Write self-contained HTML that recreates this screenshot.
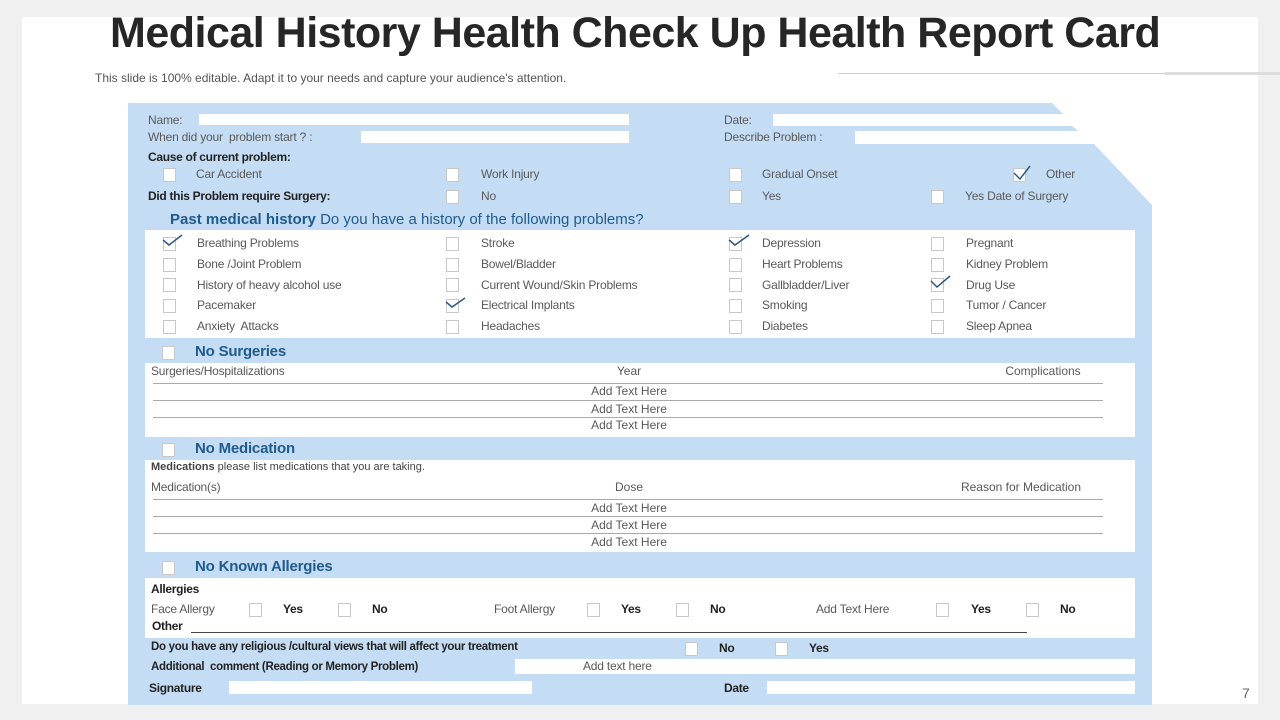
<!DOCTYPE html>
<html><head><meta charset="utf-8"><style>
*{margin:0;padding:0;box-sizing:border-box}
body{width:1280px;height:720px;background:#f0f0f0;position:relative;overflow:hidden;font-family:"Liberation Sans",Arial,sans-serif;color:#555}
.a{position:absolute;white-space:nowrap}
.t{font-size:12px;color:#595959;letter-spacing:-0.2px}
.b{font-size:12px;color:#222;font-weight:bold;letter-spacing:-0.3px}
.w{position:absolute;background:#fff}
.cb{position:absolute;width:13px;height:14px;background:#fff;border:1px solid #c8c8c8}
.ck{position:absolute;width:22px;height:16px}
.h{font-size:15px;font-weight:bold;color:#1f5a8e;letter-spacing:-0.2px}
.ln{position:absolute;height:1px;background:#aaa;left:153px;width:950px}
.c{position:absolute;font-size:12px;color:#595959;transform:translateX(-50%);white-space:nowrap}
</style></head><body>
<div class="w" style="left:22px;top:17px;width:1236px;height:687px"></div>
<div class="a" style="left:110px;top:9px;font-size:43px;font-weight:bold;color:#262626;letter-spacing:-0.5px">Medical History Health Check Up Health Report Card</div>
<div class="a" style="left:95px;top:71px;font-size:12px;color:#555">This slide is 100% editable. Adapt it to your needs and capture your audience's attention.</div>
<div class="a" style="left:838px;top:73px;width:330px;height:1px;background:#ccc"></div>
<div class="a" style="left:1165px;top:72px;width:115px;height:3px;background:#ddd"></div>
<div class="a" style="left:1242px;top:685px;font-size:14px;color:#666">7</div>
<svg class="a" style="left:0;top:0" width="1280" height="720"><polygon fill="#c5ddf4" points="128,103 1052,103 1064,115 1064,126 1072,126 1080,132 1080,144 1094,144 1152,205 1152,705 128,705"/></svg>
<!-- fields -->
<div class="w" style="left:199px;top:114px;width:430px;height:11px"></div>
<div class="w" style="left:361px;top:131px;width:268px;height:12px"></div>
<div class="w" style="left:773px;top:114px;width:291px;height:12px"></div>
<div class="w" style="left:855px;top:131px;width:225px;height:13px"></div>
<div class="a t" style="left:148px;top:113px">Name:</div>
<div class="a t" style="left:148px;top:130px">When did your&nbsp; problem start ? :</div>
<div class="a t" style="left:724px;top:113px">Date:</div>
<div class="a t" style="left:724px;top:130px">Describe Problem :</div>
<div class="a b" style="left:148px;top:150px">Cause of current problem:</div>
<div class="cb" style="left:163px;top:168px"></div><div class="a t" style="left:196px;top:167px">Car Accident</div>
<div class="cb" style="left:446px;top:168px"></div><div class="a t" style="left:481px;top:167px">Work Injury</div>
<div class="cb" style="left:729px;top:168px"></div><div class="a t" style="left:762px;top:167px">Gradual Onset</div>
<div class="cb" style="left:1013px;top:168px"></div><div class="a t" style="left:1046px;top:167px">Other</div>
<div class="a b" style="left:148px;top:189px">Did this Problem require Surgery:</div>
<div class="cb" style="left:446px;top:190px"></div><div class="a t" style="left:481px;top:189px">No</div>
<div class="cb" style="left:729px;top:190px"></div><div class="a t" style="left:762px;top:189px">Yes</div>
<div class="cb" style="left:931px;top:190px"></div><div class="a t" style="left:965px;top:189px">Yes Date of Surgery</div>
<div class="a" style="left:170px;top:211px;font-size:15px;color:#1f5a8e"><b>Past medical history</b> Do you have a history of the following problems?</div>
<!-- past history box -->
<div class="w" style="left:145px;top:230px;width:990px;height:108px"></div>
<div class="cb" style="left:163px;top:237px"></div><div class="a t" style="left:197px;top:236px">Breathing Problems</div>
<div class="cb" style="left:163px;top:258px"></div><div class="a t" style="left:197px;top:257px">Bone /Joint Problem</div>
<div class="cb" style="left:163px;top:278px"></div><div class="a t" style="left:197px;top:278px">History of heavy alcohol use</div>
<div class="cb" style="left:163px;top:299px"></div><div class="a t" style="left:197px;top:298px">Pacemaker</div>
<div class="cb" style="left:163px;top:320px"></div><div class="a t" style="left:197px;top:319px">Anxiety&nbsp; Attacks</div>
<div class="cb" style="left:446px;top:237px"></div><div class="a t" style="left:481px;top:236px">Stroke</div>
<div class="cb" style="left:446px;top:258px"></div><div class="a t" style="left:481px;top:257px">Bowel/Bladder</div>
<div class="cb" style="left:446px;top:278px"></div><div class="a t" style="left:481px;top:278px">Current Wound/Skin Problems</div>
<div class="cb" style="left:446px;top:299px"></div><div class="a t" style="left:481px;top:298px">Electrical Implants</div>
<div class="cb" style="left:446px;top:320px"></div><div class="a t" style="left:481px;top:319px">Headaches</div>
<div class="cb" style="left:729px;top:237px"></div><div class="a t" style="left:762px;top:236px">Depression</div>
<div class="cb" style="left:729px;top:258px"></div><div class="a t" style="left:762px;top:257px">Heart Problems</div>
<div class="cb" style="left:729px;top:278px"></div><div class="a t" style="left:762px;top:278px">Gallbladder/Liver</div>
<div class="cb" style="left:729px;top:299px"></div><div class="a t" style="left:762px;top:298px">Smoking</div>
<div class="cb" style="left:729px;top:320px"></div><div class="a t" style="left:762px;top:319px">Diabetes</div>
<div class="cb" style="left:931px;top:237px"></div><div class="a t" style="left:966px;top:236px">Pregnant</div>
<div class="cb" style="left:931px;top:258px"></div><div class="a t" style="left:966px;top:257px">Kidney Problem</div>
<div class="cb" style="left:931px;top:278px"></div><div class="a t" style="left:966px;top:278px">Drug Use</div>
<div class="cb" style="left:931px;top:299px"></div><div class="a t" style="left:966px;top:298px">Tumor / Cancer</div>
<div class="cb" style="left:931px;top:320px"></div><div class="a t" style="left:966px;top:319px">Sleep Apnea</div>
<!-- check marks -->
<svg class="a" style="left:0;top:0" width="1280" height="720" fill="none" stroke="#2c5a85" stroke-width="1.5">
<path d="M1014,173 L1020,179 L1030,166"/>
<path d="M163,240 L169,245 L182,235"/>
<path d="M729,240 L735,245 L749,235"/>
<path d="M931,281 L937,287 L950,276"/>
<path d="M446,302 L452,307 L465,298"/>
</svg>
<!-- surgeries -->
<div class="cb" style="left:162px;top:346px"></div><div class="a h" style="left:195px;top:343px">No Surgeries</div>
<div class="w" style="left:145px;top:363px;width:990px;height:74px"></div>
<div class="a t" style="left:151px;top:364px">Surgeries/Hospitalizations</div>
<div class="c" style="left:629px;top:364px">Year</div>
<div class="c" style="left:1043px;top:364px">Complications</div>
<div class="ln" style="top:383px"></div><div class="ln" style="top:400px"></div><div class="ln" style="top:417px"></div>
<div class="c" style="left:629px;top:384px">Add Text Here</div>
<div class="c" style="left:629px;top:402px">Add Text Here</div>
<div class="c" style="left:629px;top:418px">Add Text Here</div>
<!-- medication -->
<div class="cb" style="left:162px;top:443px"></div><div class="a h" style="left:195px;top:440px">No Medication</div>
<div class="w" style="left:145px;top:460px;width:990px;height:92px"></div>
<div class="a" style="left:151px;top:461px;font-size:11px;color:#444"><b>Medications</b> please list medications that you are taking.</div>
<div class="a t" style="left:151px;top:480px">Medication(s)</div>
<div class="c" style="left:629px;top:480px">Dose</div>
<div class="c" style="left:1021px;top:480px">Reason for Medication</div>
<div class="ln" style="top:499px"></div><div class="ln" style="top:516px"></div><div class="ln" style="top:533px"></div>
<div class="c" style="left:629px;top:501px">Add Text Here</div>
<div class="c" style="left:629px;top:518px">Add Text Here</div>
<div class="c" style="left:629px;top:535px">Add Text Here</div>
<!-- allergies -->
<div class="cb" style="left:162px;top:561px"></div><div class="a h" style="left:195px;top:558px">No Known Allergies</div>
<div class="w" style="left:145px;top:578px;width:990px;height:60px"></div>
<div class="a b" style="left:151px;top:582px">Allergies</div>
<div class="a t" style="left:151px;top:602px">Face Allergy</div>
<div class="cb" style="left:249px;top:603px"></div><div class="a b" style="left:283px;top:602px">Yes</div>
<div class="cb" style="left:338px;top:603px"></div><div class="a b" style="left:372px;top:602px">No</div>
<div class="a t" style="left:494px;top:602px">Foot Allergy</div>
<div class="cb" style="left:587px;top:603px"></div><div class="a b" style="left:621px;top:602px">Yes</div>
<div class="cb" style="left:676px;top:603px"></div><div class="a b" style="left:710px;top:602px">No</div>
<div class="a t" style="left:816px;top:602px">Add Text Here</div>
<div class="cb" style="left:936px;top:603px"></div><div class="a b" style="left:971px;top:602px">Yes</div>
<div class="cb" style="left:1026px;top:603px"></div><div class="a b" style="left:1060px;top:602px">No</div>
<div class="a b" style="left:152px;top:619px">Other</div>
<div class="a" style="left:191px;top:632px;width:836px;height:1px;background:#444"></div>
<div class="a b" style="left:151px;top:641px;font-size:11.5px">Do you have any religious /cultural views that will affect your treatment</div>
<div class="cb" style="left:685px;top:642px"></div><div class="a b" style="left:719px;top:641px">No</div>
<div class="cb" style="left:775px;top:642px"></div><div class="a b" style="left:809px;top:641px">Yes</div>
<div class="a b" style="left:151px;top:661px;font-size:11.5px">Additional&nbsp; comment (Reading or Memory Problem)</div>
<div class="w" style="left:515px;top:659px;width:620px;height:15px"></div>
<div class="a t" style="left:583px;top:659px">Add text here</div>
<div class="a b" style="left:149px;top:681px">Signature</div>
<div class="w" style="left:229px;top:681px;width:303px;height:13px"></div>
<div class="a b" style="left:724px;top:681px">Date</div>
<div class="w" style="left:767px;top:681px;width:368px;height:13px"></div>
</body></html>
